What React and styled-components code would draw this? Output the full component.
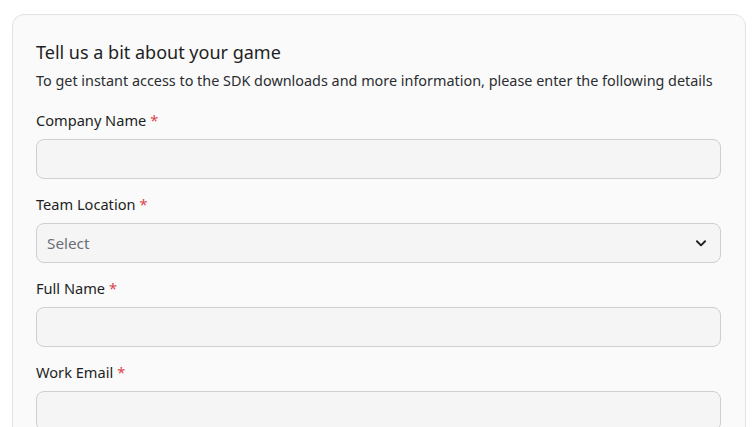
import React from "react";
import styled, { createGlobalStyle } from "styled-components";

const Global = createGlobalStyle`
  html, body { margin: 0; padding: 0; background: #ffffff; }
  body { font-family: "Noto Sans", "Liberation Sans", sans-serif; color: #1d1f23; }
  * { box-sizing: border-box; }
`;

const Page = styled.div`
  padding: 14px 8px 0 12px;
  height: 100vh;
  overflow: hidden;
`;

const Card = styled.div`
  background: #fafafa;
  border: 1px solid #e3e3e3;
  border-radius: 12px;
  padding: 24px 24px 0 23px;
  display: flex;
  flex-direction: column;
  height: 440px;
`;

const Title = styled.h1`
  margin: 0;
  font-size: 18px;
  font-weight: 400;
  line-height: 26px;
  color: #1d1f23;
`;

const Desc = styled.p`
  margin: 5px 0 0;
  font-size: 14.4px;
  line-height: 22px;
  color: #2a2d31;
`;

const Field = styled.div`
  display: flex;
  flex-direction: column;
  margin-top: ${(p) => (p.$first ? "18px" : "15px")};
`;

const Label = styled.label`
  font-size: 14.6px;
  line-height: 20px;
  color: #1d1f23;
  margin-bottom: 9px;
`;

const Star = styled.span`
  color: #e0454d;
  margin-left: 4px;
`;

const Input = styled.div`
  height: 40px;
  background: #f5f5f5;
  border: 1px solid #cfcfcf;
  border-radius: 8px;
  display: flex;
  align-items: center;
  justify-content: space-between;
  padding: 0 12px 0 10px;
  font-size: 15.3px;
  color: #6b6f75;
`;

const Chevron = () => (
  <svg width="14" height="14" viewBox="0 0 24 24" fill="none" stroke="#1d1f23" strokeWidth="3.2" strokeLinecap="round" strokeLinejoin="round">
    <polyline points="5 9 12 16 19 9" />
  </svg>
);

const fields = [
  { label: "Company Name" },
  { label: "Team Location", select: true },
  { label: "Full Name" },
  { label: "Work Email" },
];

export default function App() {
  return (
    <>
      <Global />
      <Page>
        <Card>
          <Title>Tell us a bit about your game</Title>
          <Desc>To get instant access to the SDK downloads and more information, please enter the following details</Desc>
          {fields.map((f, i) => (
            <Field key={f.label} $first={i === 0}>
              <Label>
                {f.label}
                <Star>*</Star>
              </Label>
              <Input>
                {f.select && (
                  <>
                    <span>Select</span>
                    <Chevron />
                  </>
                )}
              </Input>
            </Field>
          ))}
        </Card>
      </Page>
    </>
  );
}
